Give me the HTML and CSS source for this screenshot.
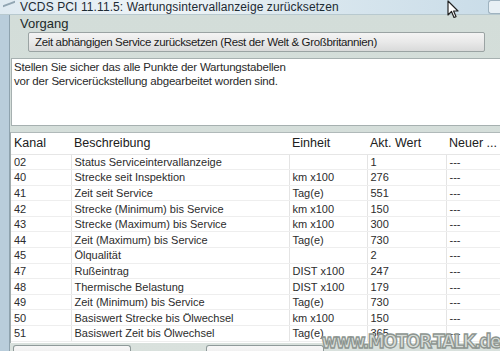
FILE: index.html
```html
<!DOCTYPE html>
<html lang="de">
<head>
    <meta charset="UTF-8">
    <title>VCDS Wartungsintervallanzeige</title>
    <link rel="stylesheet" href="styles.css">
</head>
<body>

<div class="window">
    <!-- Title bar -->
    <div class="titlebar">
        <span class="app-icon"></span>
        <span class="title">VCDS PCI 11.11.5: Wartungsintervallanzeige zurücksetzen</span>
        <span class="close-box"></span>
    </div>

    <div class="frame">
        <!-- Vorgang group -->
        <div class="group">
            <div class="legend">Vorgang</div>
            <div class="combo">Zeit abhängigen Service zurücksetzen (Rest der Welt &amp; Großbritannien)</div>
        </div>

        <div class="notes">
            Stellen Sie sicher das alle Punkte der Wartungstabellen<br>
            vor der Servicerückstellung abgearbeitet worden sind.
        </div>

        <!-- Channel table -->
        <div class="table-box">
            <table>
                <thead>
                    <tr>
                        <th class="c-kanal">Kanal</th>
                        <th class="c-desc">Beschreibung</th>
                        <th class="c-unit">Einheit</th>
                        <th class="c-val">Akt. Wert</th>
                        <th class="c-new">Neuer ...</th>
                    </tr>
                </thead>
                <tbody>
                    <tr><td>02</td><td>Status Serviceintervallanzeige</td><td></td><td>1</td><td>---</td></tr>
                    <tr><td>40</td><td>Strecke seit Inspektion</td><td>km x100</td><td>276</td><td>---</td></tr>
                    <tr><td>41</td><td>Zeit seit Service</td><td>Tag(e)</td><td>551</td><td>---</td></tr>
                    <tr><td>42</td><td>Strecke (Minimum) bis Service</td><td>km x100</td><td>150</td><td>---</td></tr>
                    <tr><td>43</td><td>Strecke (Maximum) bis Service</td><td>km x100</td><td>300</td><td>---</td></tr>
                    <tr><td>44</td><td>Zeit (Maximum) bis Service</td><td>Tag(e)</td><td>730</td><td>---</td></tr>
                    <tr><td>45</td><td>Ölqualität</td><td></td><td>2</td><td>---</td></tr>
                    <tr><td>47</td><td>Rußeintrag</td><td>DIST x100</td><td>247</td><td>---</td></tr>
                    <tr><td>48</td><td>Thermische Belastung</td><td>DIST x100</td><td>179</td><td>---</td></tr>
                    <tr><td>49</td><td>Zeit (Minimum) bis Service</td><td>Tag(e)</td><td>730</td><td>---</td></tr>
                    <tr><td>50</td><td>Basiswert Strecke bis Ölwechsel</td><td>km x100</td><td>150</td><td>---</td></tr>
                    <tr><td>51</td><td>Basiswert Zeit bis Ölwechsel</td><td>Tag(e)</td><td>365</td><td>---</td></tr>
                </tbody>
            </table>
        </div>

        <div class="buttons">
            <span class="btn btn-left"></span>
            <span class="btn btn-mid"></span>
        </div>
    </div>

    <!-- overlays -->
    <svg class="cursor" width="12" height="19" viewBox="0 0 12 19">
        <path d="M1 1 L1 15 L4.5 11.5 L7 17.5 L9 16.6 L6.6 11 L11 11 Z" fill="#fff" stroke="#222" stroke-width="1.2" stroke-linejoin="round"/>
    </svg>
    <div class="watermark">www.MOTOR-TALK.de</div>
</div>

</body>
</html>
```

FILE: styles.css
```css
* {
    margin: 0;
    padding: 0;
    box-sizing: border-box;
}

body {
    width: 500px;
    height: 351px;
    overflow: hidden;
    font-family: 'Liberation Sans', Arial, sans-serif;
    color: #2a2a2a;
    background: #d6dfdb;
}

.window {
    position: relative;
    width: 500px;
    height: 351px;
    display: flex;
    flex-direction: column;
}

/* Title bar */
.titlebar {
    height: 19px;
    display: flex;
    align-items: center;
    gap: 5px;
    padding-left: 3px;
    background: linear-gradient(to right, #dfeaf1 0%, #eef4f7 35%, #dbe8ef 60%, #c9dce8 100%);
    border-bottom: 1px solid #b8c9cf;
}

.app-icon {
    width: 12px;
    height: 8px;
    border-top: 2px solid #6f8797;
    transform: skewY(-20deg);
    opacity: 0.7;
}

.title {
    font-size: 12px;
    color: #1d2a33;
    letter-spacing: 0.1px;
}

.close-box {
    margin-left: auto;
    width: 12px;
    height: 14px;
    border: 1px solid #9fb3c0;
    border-right: none;
    border-radius: 3px 0 0 3px;
    background: #e8f0f5;
}

/* Window body */
.frame {
    flex: 1;
    display: flex;
    flex-direction: column;
    border-left: 9px solid #b9cddb;
    background: linear-gradient(to bottom, #d3ddd9, #d9e1dd);
    box-shadow: inset 1px 0 0 #8ea2ae;
}

.group {
    padding: 0 15px 6px 11px;
}

.legend {
    font-size: 13px;
    line-height: 16px;
    padding-top: 1px;
    color: #1d2a2a;
}

.combo {
    margin-left: 8px;
    height: 20px;
    padding: 3px 6px 0;
    font-size: 11.5px;
    letter-spacing: -0.35px;
    color: #1b1b1b;
    border: 1px solid #9aa3a3;
    border-radius: 2px;
    background: linear-gradient(to bottom, #f4f4f4 0%, #e9e9e9 50%, #d9dada 100%);
}

.notes {
    height: 68px;
    margin-left: 2px;
    padding: 1px 2px;
    font-size: 11.5px;
    letter-spacing: -0.2px;
    line-height: 14px;
    background: #fff;
    border: 1px solid #a6b0b0;
    border-right: none;
    color: #2a2a2a;
}

/* Table */
.table-box {
    margin-top: 6px;
    margin-left: 1px;
    height: 211px;
    overflow: hidden;
    background: #fff;
    border-top: 1px solid #b0b9b9;
    border-left: 1px solid #a0aaaa;
}

table {
    width: 100%;
    border-collapse: collapse;
    table-layout: fixed;
}

th {
    height: 21px;
    font-size: 12.5px;
    font-weight: normal;
    text-align: left;
    padding-left: 3px;
    color: #202020;
    border-bottom: 1px solid #e6e6e6;
    white-space: nowrap;
}

td {
    height: 15.6px;
    font-size: 11px;
    padding-left: 3px;
    white-space: nowrap;
    overflow: hidden;
    border-bottom: 1px solid #eeeeee;
    border-left: 1px solid #e4e4e4;
    color: #2c2c2c;
}

td:first-child {
    border-left: none;
}

.c-kanal { width: 60px; }
.c-desc  { width: 218px; }
.c-unit  { width: 78px; }
.c-val   { width: 79px; }

/* Bottom buttons */
.buttons {
    flex: 1;
    display: flex;
    gap: 75px;
    padding: 2px 0 0 4px;
}

.btn {
    width: 118px;
    height: 14px;
    border: 1px solid #8f9a9a;
    border-bottom: none;
    border-radius: 3px 3px 0 0;
    background: linear-gradient(to bottom, #f7f7f7, #e8e8e8);
}

/* Overlays */
.cursor {
    position: absolute;
    left: 447px;
    top: 0;
}

.watermark {
    position: absolute;
    right: 0;
    bottom: -1px;
    font-family: 'DejaVu Sans Condensed', 'DejaVu Sans', sans-serif;
    font-stretch: condensed;
    font-weight: bold;
    font-size: 19px;
    line-height: 22px;
    letter-spacing: -1.6px;
    color: #d8ddd9;
    -webkit-text-stroke: 1.3px #8d9590;
}
```
